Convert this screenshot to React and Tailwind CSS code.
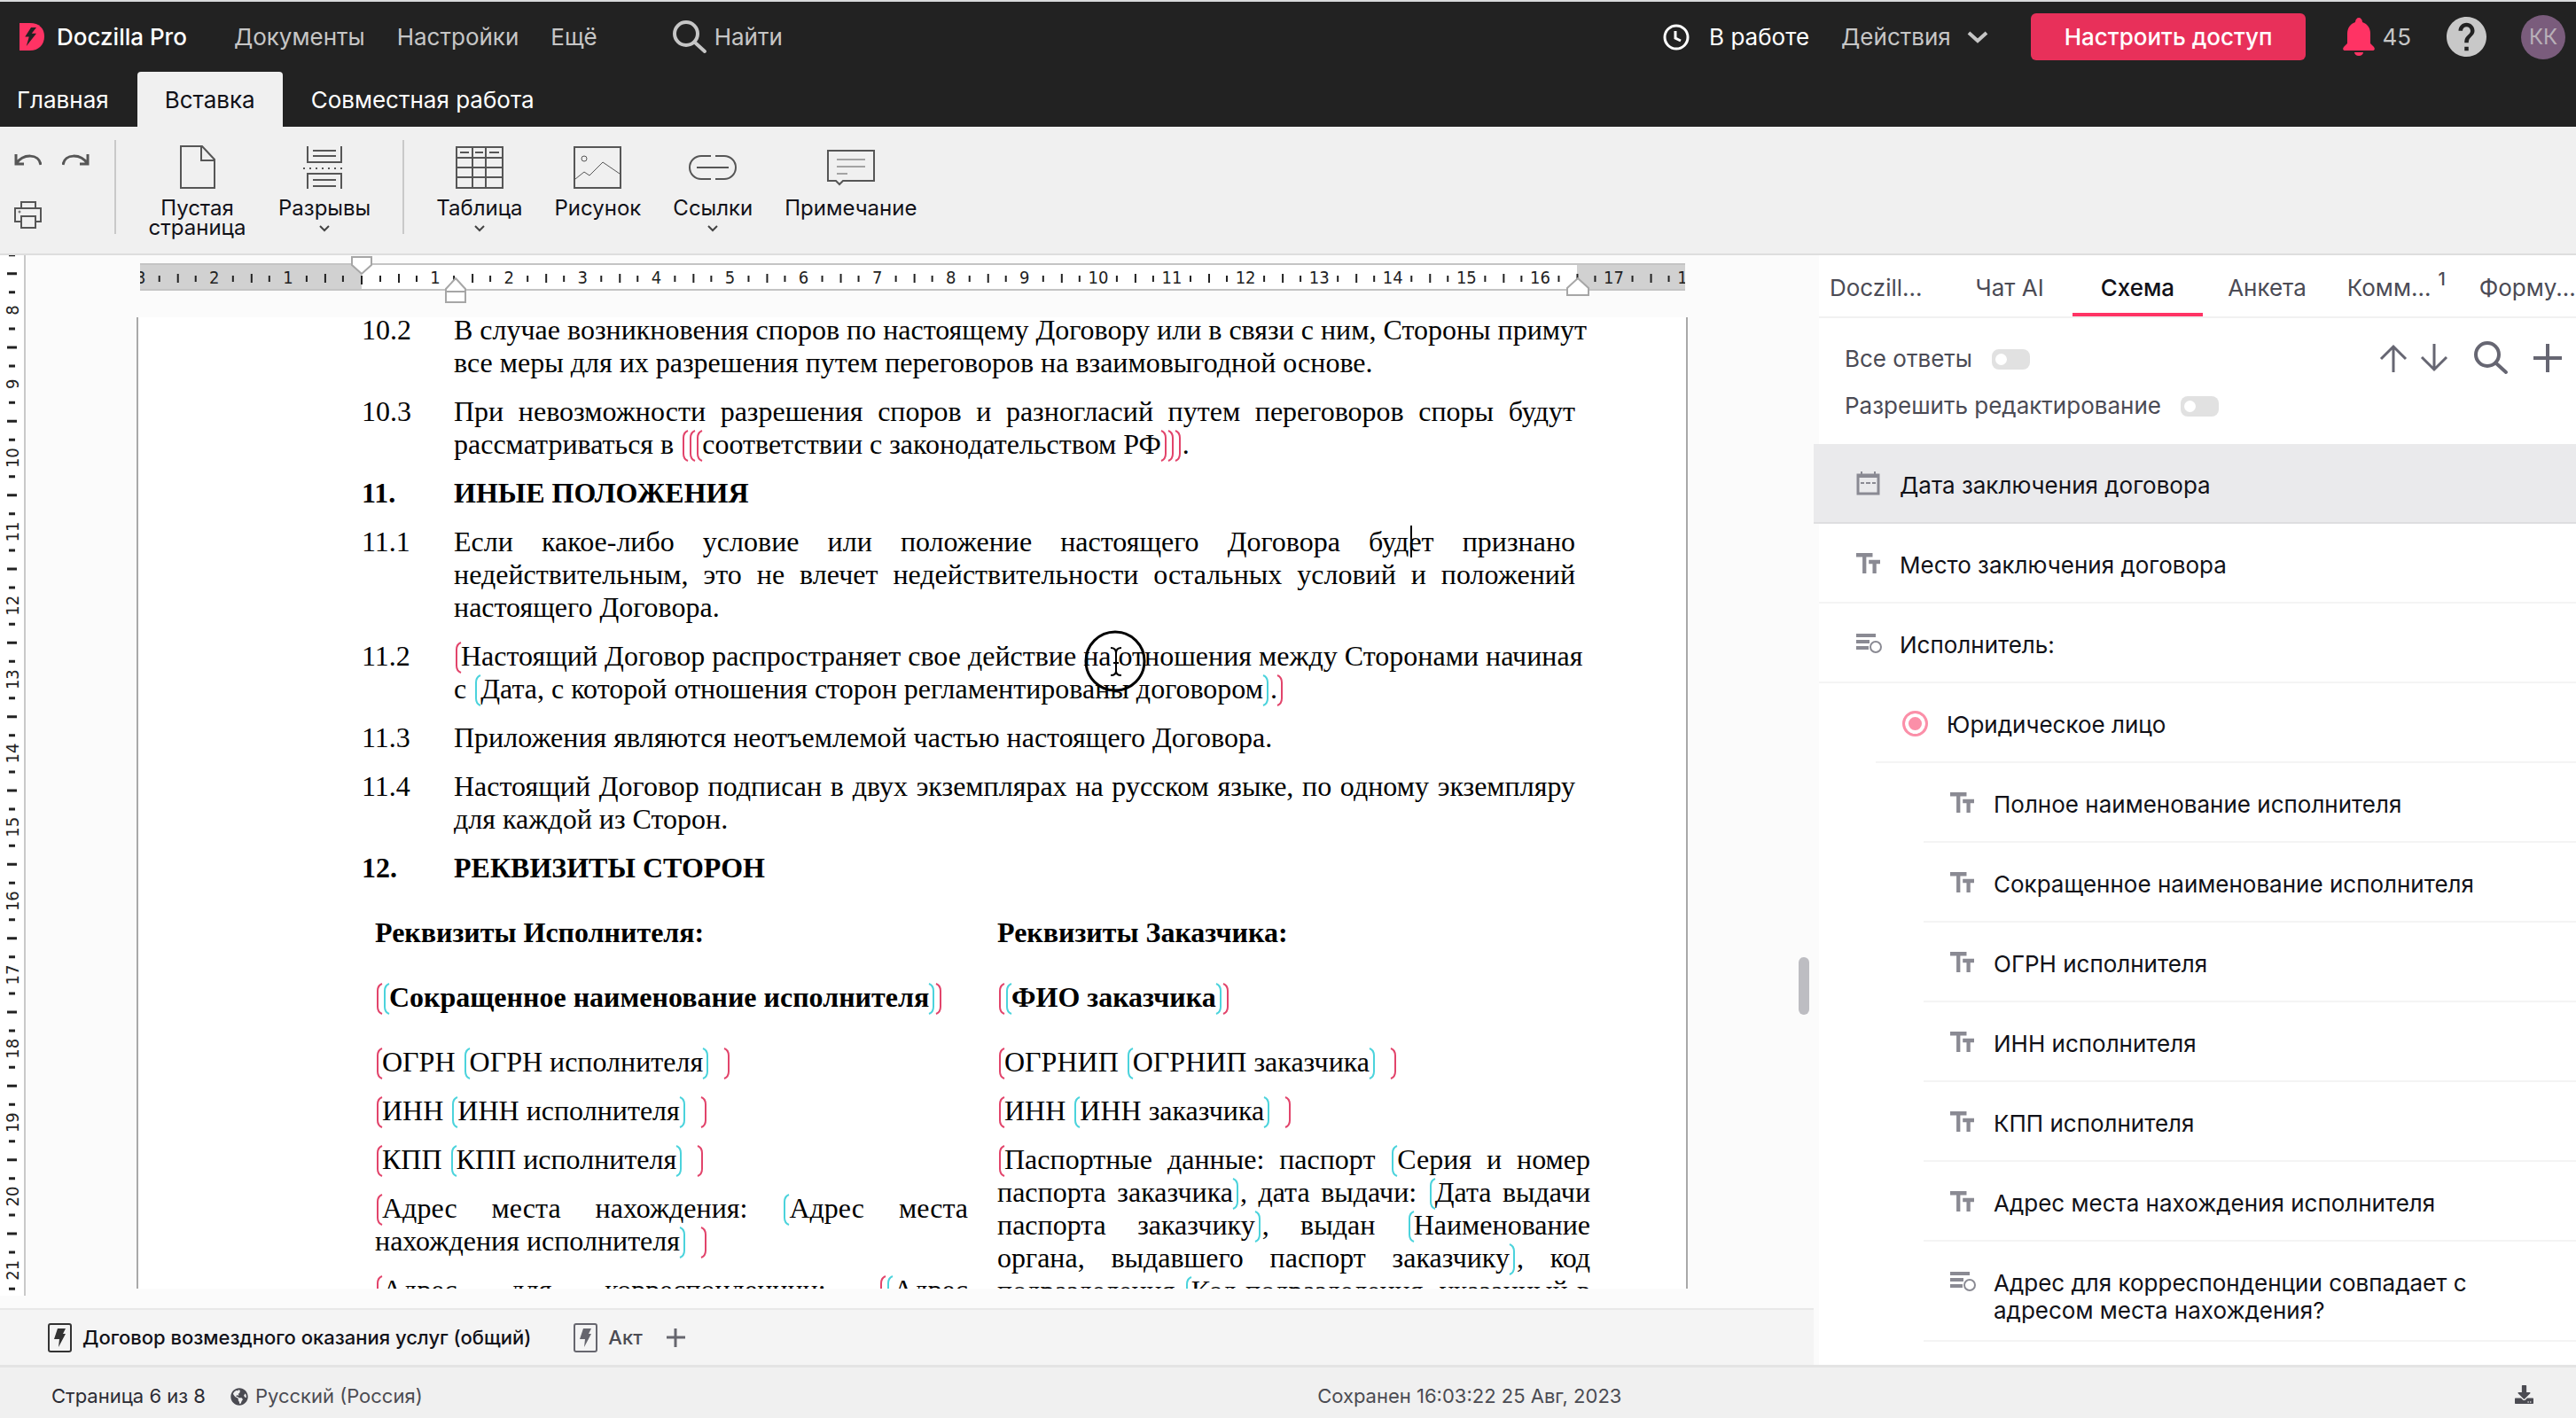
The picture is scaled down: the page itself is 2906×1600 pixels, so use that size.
import { FaGlobeAmericas, FaDownload } from "react-icons/fa";

const OPEN = "M8 1 Q3 3 3 9 V27 Q3 33 8 35";
const CLOSE = "M0 1 Q5 3 5 9 V27 Q5 33 0 35";

// Field brackets inside the document text
const Mark = ({ d, className }) => (
  <svg viewBox="0 0 8 36" className={`inline w-2 h-9 -my-1 align-[-5px] overflow-visible fill-none stroke-2 ${className}`}>
    <path d={d} />
  </svg>
);
const PO = () => <Mark d={OPEN} className="stroke-[#e2446b]" />;
const PC = () => <Mark d={CLOSE} className="stroke-[#e2446b]" />;
const CO = () => <Mark d={OPEN} className="stroke-[#4bd3dc]" />;
const CC = () => <Mark d={CLOSE} className="stroke-[#4bd3dc]" />;

// One justified line of a paragraph, the last line stays ragged
const Line = ({ children }) => (
  <span className="block whitespace-nowrap [text-align-last:justify]">{children}</span>
);
const Last = ({ children }) => <span className="block whitespace-nowrap">{children}</span>;

const Clause = ({ num, bold, children }) => (
  <div className={`flex ${bold ? "font-bold" : ""}`}>
    <span className="w-[104px] shrink-0">{num}</span>
    <p className="flex-1 min-w-0">{children}</p>
  </div>
);

const Icon = ({ w, h, children }) => (
  <svg width={w} height={h} viewBox={`0 0 ${w} ${h}`} fill="none" stroke="#565656" strokeWidth="2" className="shrink-0">
    {children}
  </svg>
);

const SearchIcon = ({ className }) => (
  <svg viewBox="0 0 40 38" fill="none" stroke="currentColor" strokeWidth="4" strokeLinecap="round" className={className}>
    <circle cx="16" cy="15" r="13" />
    <path d="M26 25 L37 35" />
  </svg>
);

const Chevron = ({ className }) => (
  <svg viewBox="0 0 12 8" fill="none" stroke="currentColor" strokeWidth="2" className={className}>
    <path d="M1 1 L6 6 L11 1" />
  </svg>
);

const BOLT = "M12 0 L3 14 H9 L5 28 L20 9 H13 L20 0 Z";

const DocIcon = ({ className }) => (
  <svg viewBox="0 0 27 33" fill="none" className={className}>
    <rect x="1" y="1" width="25" height="31" rx="2" stroke="currentColor" strokeWidth="2" />
    <path d="M11 6 H20 L17 12 H20 L12 27 L13 18 H7 Z" fill="currentColor" />
  </svg>
);

const tools = [
  {
    label: "Пустая страница", width: "w-[111px]",
    icon: (
      <Icon w={40} h={50}>
        <path d="M1 1 H25 L39 16 V48 H1 Z M24 1 V17 H39" />
      </Icon>
    ),
  },
  {
    label: "Разрывы", menu: true,
    icon: (
      <Icon w={50} h={50}>
        <path d="M6 1 V19 H44 V1 M6 49 V32 H44 V49 M12 6 H38 M12 12 H38 M12 39 H38 M12 46 H38" />
        <path d="M1 26 H50" strokeDasharray="2 5" />
      </Icon>
    ),
  },
  {
    label: "Таблица", menu: true, divider: true,
    icon: (
      <Icon w={54} h={48}>
        <path d="M1 1 H53 V47 H1 Z M1 13 H53 M1 24 H53 M1 35 H53 M19 1 V47 M34 1 V47 M5 7 H15 M22 7 H31 M38 7 H49" />
      </Icon>
    ),
  },
  {
    label: "Рисунок",
    icon: (
      <Icon w={54} h={48}>
        <path d="M1 1 H53 V47 H1 Z" />
        <path d="M2 37 L12 29 L18 33 L33 18 L52 31" strokeWidth="1" />
        <circle cx="12" cy="14" r="3" strokeWidth="1" />
      </Icon>
    ),
  },
  {
    label: "Ссылки", menu: true,
    icon: (
      <Icon w={54} h={28}>
        <path d="M25 1 H14 A13 13 0 0 0 14 27 H25 M30 1 H40 A13 13 0 0 1 40 27 H30 M9 14 H45" />
      </Icon>
    ),
  },
  {
    label: "Примечание",
    icon: (
      <Icon w={54} h={42}>
        <path d="M1 2 H53 V36 H18 L14 40 L10 36 H1 Z" />
        <path d="M11 12 H43 M11 20 H43 M11 28 H23" strokeWidth="1" />
      </Icon>
    ),
  },
];

const TextIcon = () => (
  <svg viewBox="2.5 4 19 15" className="w-[27px] h-[23px] fill-[#8a8a93]" preserveAspectRatio="none">
    <path d="M2.5 4v3h5v12h3V7h5V4h-13zm19 5h-9v3h3v7h3v-7h3V9z" />
  </svg>
);

const CalendarIcon = () => (
  <svg viewBox="0 0 27 27" fill="none" stroke="#8a8a93" className="w-[27px] h-[27px]">
    <path d="M2 4 H25 V25 H2 Z" strokeWidth="3" />
    <path d="M1 5 H26" strokeWidth="4" />
    <path d="M6 0 V4 M21 0 V4 M5 13 H9 M11 13 H16 M18 13 H22" strokeWidth="2" />
  </svg>
);

const ListIcon = () => (
  <svg viewBox="0 0 30 23" fill="none" stroke="#8a8a93" className="w-[30px] h-[23px]">
    <path d="M0 3 H22 M0 10 H15 M0 17 H14" strokeWidth="4" />
    <circle cx="22" cy="16" r="6" strokeWidth="2" />
  </svg>
);

const rowIcons = { date: <CalendarIcon />, text: <TextIcon />, list: <ListIcon /> };
const indents = ["pl-[42px]", "ml-16 pl-[30px]", "ml-[118px] pl-[30px]"];

const schema = [
  { level: 0, type: "date", title: "Дата заключения договора", active: true },
  { level: 0, type: "text", title: "Место заключения договора" },
  { level: 0, type: "list", title: "Исполнитель:" },
  { level: 1, type: "radio", title: "Юридическое лицо" },
  { level: 2, type: "text", title: "Полное наименование исполнителя" },
  { level: 2, type: "text", title: "Сокращенное наименование исполнителя" },
  { level: 2, type: "text", title: "ОГРН исполнителя" },
  { level: 2, type: "text", title: "ИНН исполнителя" },
  { level: 2, type: "text", title: "КПП исполнителя" },
  { level: 2, type: "text", title: "Адрес места нахождения исполнителя" },
  { level: 2, type: "list", title: "Адрес для корреспонденции совпадает с адресом места нахождения?" },
];

// 16.5 cm of text width between the margins
const CM = 1371 / 16.5;
const rulerFont = "font-['DejaVu_Sans_Condensed','DejaVu_Sans',sans-serif] text-[20px] fill-[#222]";

const HRuler = () => (
  <svg width="1743" height="31" className="overflow-hidden block">
    <rect width="1743" height="31" fill="#d1d1d1" />
    <rect x="250" y="2" width="1371" height="27" fill="#fff" />
    <path d="M0 1 H1743 M0 30 H1743" stroke="#c4c4c4" strokeWidth="2" />
    {Array.from({ length: 22 }, (_, i) => i - 3).map((n) => {
      const x = 250 + n * CM;
      return (
        <g key={n}>
          {n === 0 && <path d={`M${x} 14 V24`} stroke="#222" strokeWidth="2" />}
          {n !== 0 && n < 19 && (
            <text x={x} y="23" textAnchor="middle" className={rulerFont}>{Math.abs(n)}</text>
          )}
          <path d={`M${x + 21} 14 V21 M${x + 42} 12 V22 M${x + 62} 14 V21`} stroke="#222" strokeWidth="2" />
        </g>
      );
    })}
  </svg>
);

const VRuler = () => (
  <svg width="27" height="1174" className="block overflow-hidden">
    {Array.from({ length: 15 }, (_, i) => i + 7).map((n) => {
      const y = 62 + ((n - 8) * 250) / 3;
      return (
        <g key={n}>
          {n > 7 && (
            <text transform={`translate(21 ${y}) rotate(-90)`} textAnchor="middle" className={rulerFont}>{n}</text>
          )}
          <path d={`M10 ${y + 21} h7 M8 ${y + 42} h11 M10 ${y + 63} h7`} stroke="#222" strokeWidth="3" />
        </g>
      );
    })}
  </svg>
);

const Header = () => (
  <header className="bg-[#222] border-t-2 border-[#d9dadc] text-[26px] leading-8 text-[#c6c6c6]">
    <div className="flex items-center h-[79px] pl-[22px] pr-3">
      <a href="#" className="flex items-center gap-3.5 text-white font-medium">
        <svg viewBox="0 0 28 31" className="w-7 h-[31px]">
          <path d="M0 0 H12 C22 0 28 6 28 15 C28 25 21 31 12 31 H0 Z" fill="#ff3364" />
          <path d={BOLT} fill="#222" transform="translate(4 5) scale(0.75)" />
        </svg>
        Doczilla Pro
      </a>
      <nav className="flex gap-9 ml-[53px]">
        <a href="#">Документы</a>
        <a href="#">Настройки</a>
        <a href="#">Ещё</a>
      </nav>
      <button className="flex items-center gap-2 ml-[84px]">
        <SearchIcon className="w-10 h-[38px]" />
        Найти
      </button>

      <div className="flex items-center ml-auto">
        <button className="flex items-center gap-[22px] text-white">
          <svg viewBox="0 0 30 30" fill="none" stroke="currentColor" strokeWidth="3" className="w-[30px] h-[30px]">
            <circle cx="15" cy="15" r="13" />
            <path d="M14 8 V16 L20 19" />
          </svg>
          В работе
        </button>
        <button className="flex items-center gap-[18px] ml-9">
          Действия
          <svg viewBox="0 0 24 14" fill="none" stroke="currentColor" strokeWidth="4" className="w-6 h-3.5">
            <path d="M2 2 L12 11 L22 2" />
          </svg>
        </button>
        <button className="h-[53px] px-[38px] ml-12 rounded-md bg-[#e8305a] text-white font-medium">Настроить доступ</button>
        <button className="flex items-center gap-2 ml-[42px]">
          <svg viewBox="0 0 36 43" fill="#ff3364" className="w-9 h-[43px]">
            <path d="M18 0 C20 0 22 2 22 5 C28 7 31 12 31 18 V29 L35 33 C37 36 35 37 33 37 H3 C1 37 -1 36 1 33 L5 29 V18 C5 12 8 7 14 5 C14 2 16 0 18 0 Z" />
            <path d="M13 39 H23 C23 41 21 43 18 43 C15 43 13 41 13 39 Z" />
          </svg>
          45
        </button>
        <button aria-label="Справка" className="ml-10">
          <svg viewBox="2 2 20 20" fill="#c8c8c8" className="w-[45px] h-[45px]">
            <path d="M12 2C6.48 2 2 6.48 2 12s4.48 10 10 10 10-4.48 10-10S17.52 2 12 2zm1 17h-2v-2h2v2zm2.07-7.75l-.9.92C13.45 12.9 13 13.5 13 15h-2v-.5c0-1.1.45-2.1 1.17-2.83l1.24-1.26c.37-.36.59-.86.59-1.41 0-1.1-.9-2-2-2s-2 .9-2 2H8c0-2.21 1.79-4 4-4s4 1.79 4 4c0 .88-.36 1.68-.93 2.25z" />
          </svg>
        </button>
        <button className="ml-[39px] w-[50px] h-[50px] rounded-full bg-[#7a5c7c] text-[24px] text-[#b8b0b8]">КК</button>
      </div>
    </div>

    <nav className="flex h-[62px] text-white">
      <button className="pt-0.5 pl-[19px] pr-8">Главная</button>
      <button className="pt-0.5 px-[31px] rounded-t-sm bg-[#f0f0f0] text-[#111118]">Вставка</button>
      <button className="pt-0.5 px-8">Совместная работа</button>
    </nav>
  </header>
);

const Toolbar = () => (
  <div className="flex h-[145px] bg-[#f0f0f0] border-b-2 border-[#dedede] text-[24px] leading-[22px] text-[#111118]">
    <div className="grid grid-cols-2 gap-x-[23px] gap-y-10 content-start pt-[31px] pl-4 pr-7">
      <button aria-label="Отменить">
        <Icon w={31} h={13}>
          <path d="M2 0 V11 H11 M2 11 C10 -1 28 -1 30 12" strokeWidth="3" />
        </Icon>
      </button>
      <button aria-label="Повторить">
        <Icon w={31} h={13}>
          <path d="M29 0 V11 H20 M29 11 C21 -1 3 -1 1 12" strokeWidth="3" />
        </Icon>
      </button>
      <button aria-label="Печать">
        <Icon w={31} h={31}>
          <path d="M8 8 V1 H24 V8 M8 23 H1 V8 H30 V23 H24 M8 17 H24 V30 H8 Z" />
          <circle cx="6" cy="12" r="1" strokeWidth="1" />
        </Icon>
      </button>
    </div>
    <div className="w-0.5 h-[106px] mt-[15px] bg-[#c9c9c9]" />
    <div className="flex gap-9 pl-9">
      {tools.map((t) => (
        <div key={t.label} className="flex gap-9">
          {t.divider && <div className="w-0.5 h-[106px] mt-[15px] bg-[#c9c9c9]" />}
          <button className={`flex flex-col items-center pt-[21px] ${t.width || ""}`}>
            <span className="flex items-center h-[50px] mb-2.5">{t.icon}</span>
            {t.label}
            {t.menu && <Chevron className="w-3 h-2 mt-2 text-[#444]" />}
          </button>
        </div>
      ))}
    </div>
  </div>
);

const Contract = () => (
  <div className="-mt-1 ml-[252px] w-[1369px] flex flex-col gap-[18px]">
    <Clause num="10.2">
      <Line>В случае возникновения споров по настоящему Договору или в связи с ним, Стороны примут</Line>
      <Last>все меры для их разрешения путем переговоров на взаимовыгодной основе.</Last>
    </Clause>
    <Clause num="10.3">
      <Line>При невозможности разрешения споров и разногласий путем переговоров споры будут</Line>
      <Last>рассматриваться в <PO /><PO /><PO />соответствии с законодательством РФ<PC /><PC /><PC />.</Last>
    </Clause>
    <Clause num="11." bold>ИНЫЕ ПОЛОЖЕНИЯ</Clause>
    <Clause num="11.1">
      <Line>
        Если какое-либо условие или положение настоящего Договора буд
        <span className="relative"><span className="absolute left-0.5 top-0 w-0.5 h-9 bg-black" /></span>
        ет признано
      </Line>
      <Line>недействительным, это не влечет недействительности остальных условий и положений</Line>
      <Last>настоящего Договора.</Last>
    </Clause>
    <Clause num="11.2">
      <Line><PO />Настоящий Договор распространяет свое действие на отношения между Сторонами начиная</Line>
      <Last>с <CO />Дата, с которой отношения сторон регламентированы договором<CC />.<PC /></Last>
    </Clause>
    <Clause num="11.3"><Last>Приложения являются неотъемлемой частью настоящего Договора.</Last></Clause>
    <Clause num="11.4">
      <Line>Настоящий Договор подписан в двух экземплярах на русском языке, по одному экземпляру</Line>
      <Last>для каждой из Сторон.</Last>
    </Clause>
    <Clause num="12." bold>РЕКВИЗИТЫ СТОРОН</Clause>

    <div className="grid grid-cols-2 gap-x-[33px] ml-[15px] w-[1371px] mt-[18px]">
      <div className="flex flex-col gap-[18px]">
        <p className="font-bold mb-[18px]">Реквизиты Исполнителя:</p>
        <p className="font-bold mb-[18px]"><PO /><CO />Сокращенное наименование исполнителя<CC /><PC /></p>
        <p><PO />ОГРН <CO />ОГРН исполнителя<CC />&nbsp; <PC /></p>
        <p><PO />ИНН <CO />ИНН исполнителя<CC />&nbsp; <PC /></p>
        <p><PO />КПП <CO />КПП исполнителя<CC />&nbsp; <PC /></p>
        <p>
          <Line><PO />Адрес места нахождения: <CO />Адрес места</Line>
          <Last>нахождения исполнителя<CC />&nbsp; <PC /></Last>
        </p>
        <p>
          <Line><PO />Адрес для корреспонденции: <PO /><CO />Адрес</Line>
        </p>
      </div>
      <div className="flex flex-col gap-[18px]">
        <p className="font-bold mb-[18px]">Реквизиты Заказчика:</p>
        <p className="font-bold mb-[18px]"><PO /><CO />ФИО заказчика<CC /><PC /></p>
        <p><PO />ОГРНИП <CO />ОГРНИП заказчика<CC />&nbsp; <PC /></p>
        <p><PO />ИНН <CO />ИНН заказчика<CC />&nbsp; <PC /></p>
        <p>
          <Line><PO />Паспортные данные: паспорт <CO />Серия и номер</Line>
          <Line>паспорта заказчика<CC />, дата выдачи: <CO />Дата выдачи</Line>
          <Line>паспорта заказчику<CC />, выдан <CO />Наименование</Line>
          <Line>органа, выдавшего паспорт заказчику<CC />, код</Line>
          <Line>подразделения <CO />Код подразделения, указанный в</Line>
        </p>
      </div>
    </div>
  </div>
);

const Editor = () => (
  <section className="flex flex-col flex-1 min-w-0 bg-[#fbfbfb]">
    <div className="flex flex-1 min-h-0">
      <div className="shrink-0 mb-3.5 bg-white border-r-2 border-[#c9c9c9] overflow-hidden">
        <VRuler />
      </div>

      <div className="flex flex-col flex-1 min-w-0 items-center pt-[9px] pb-[22px]">
        <div className="relative w-[1743px] shrink-0">
          <HRuler />
          <svg width="24" height="22" className="absolute left-[238px] -top-2" fill="#fff" stroke="#a6a6a6" strokeWidth="2">
            <path d="M1 1 H23 V10 L12 20 L1 10 Z" />
          </svg>
          <svg width="24" height="30" className="absolute left-[344px] top-4" fill="#fff" stroke="#a6a6a6" strokeWidth="2">
            <path d="M12 1 L23 13 V28 H1 V13 Z M1 16 H23" />
          </svg>
          <svg width="26" height="22" className="absolute left-[1609px] top-4" fill="#fff" stroke="#a6a6a6" strokeWidth="2">
            <path d="M13 1 L25 12 V20 H1 V12 Z" />
          </svg>
        </div>

        <div className="relative flex-1 min-h-0 w-[1750px] mt-[30px] overflow-hidden bg-white border-x-2 border-[#a9a9a9] font-['Liberation_Serif',serif] text-[32px] leading-[37px] text-black">
          <Contract />
          {/* mouse pointer with click ring */}
          <svg width="70" height="70" viewBox="0 0 70 70" fill="none" stroke="#000" className="absolute left-[1067px] top-[353px]">
            <circle cx="35" cy="35" r="33" strokeWidth="3" />
            <path d="M30 20 Q36 20 36 26 V46 Q36 51 30 51 M42 20 Q36 20 36 26 M36 46 Q36 51 42 51 M33 37 H39" strokeWidth="2" />
          </svg>
        </div>
      </div>

      <div className="w-[17px] flex flex-col">
        <div className="basis-2/3" />
        <div className="w-3 h-[65px] rounded-full bg-[#bdbdc2]" />
      </div>
    </div>

    <div className="flex items-center h-16 shrink-0 pl-[54px] bg-[#f4f4f4] border-t-2 border-[#e8e8e8] text-[22px] text-[#4b4b52]">
      <button className="flex items-center gap-3 text-[#111118] font-medium">
        <DocIcon className="w-[27px] h-[33px] text-[#333]" />
        Договор возмездного оказания услуг (общий)
      </button>
      <button className="flex items-center gap-3 ml-12 font-medium">
        <DocIcon className="w-[27px] h-[33px] text-[#66666e]" />
        Акт
      </button>
      <button aria-label="Добавить документ" className="ml-[27px]">
        <svg viewBox="0 0 21 21" stroke="#66666e" strokeWidth="3" className="w-[21px] h-[21px]">
          <path d="M10 0 V21 M0 10 H21" />
        </svg>
      </button>
    </div>
  </section>
);

const Toggle = ({ label }) => (
  <label className="flex items-center gap-[22px]">
    {label}
    <input
      type="checkbox"
      className="appearance-none relative w-[43px] h-[23px] rounded-lg bg-[#e1e1e1] before:absolute before:left-1 before:top-[5px] before:w-[13px] before:h-[13px] before:rounded-full before:bg-white"
    />
  </label>
);

const SidePanel = () => (
  <aside className="w-[860px] shrink-0 pl-1.5 bg-[#fbfbfb]">
    <div className="h-full bg-white">
      <nav className="flex items-stretch h-[71px] border-b-2 border-[#f1f1f1] pl-3 text-[26px] text-[#4b4b55] whitespace-nowrap">
        <button className="pt-1 pr-7">Doczill...</button>
        <button className="pt-1 px-8">Чат AI</button>
        <button className="pt-2 px-8 border-b-4 border-[#ff3364] text-[#111118] font-medium">Схема</button>
        <button className="pt-1 px-7">Анкета</button>
        <button className="flex pt-1 pl-[18px] pr-[38px] items-center">
          Комм...
          <sup className="pl-2 text-[20px] font-medium -top-2.5">1</sup>
        </button>
        <button className="pt-1">Форму...</button>
      </nav>

      <div className="flex justify-between items-start h-[142px] pt-[26px] pl-[29px] pr-4 text-[26px] leading-8 text-[#4b4b55]">
        <div className="flex flex-col gap-[21px] pt-1">
          <Toggle label="Все ответы" />
          <Toggle label="Разрешить редактирование" />
        </div>
        <div className="flex items-center text-[#666672]">
          <button aria-label="Вверх">
            <svg viewBox="0 0 32 32" fill="none" stroke="currentColor" strokeWidth="3" className="w-8 h-8">
              <path d="M16 32 V3 M2 17 L16 3 L30 17" />
            </svg>
          </button>
          <button aria-label="Вниз" className="ml-3.5">
            <svg viewBox="0 0 32 32" fill="none" stroke="currentColor" strokeWidth="3" className="w-8 h-8">
              <path d="M16 0 V29 M2 15 L16 29 L30 15" />
            </svg>
          </button>
          <button aria-label="Поиск" className="ml-7">
            <SearchIcon className="w-10 h-[38px]" />
          </button>
          <button aria-label="Добавить" className="ml-7">
            <svg viewBox="0 0 32 32" stroke="currentColor" strokeWidth="4" className="w-8 h-8">
              <path d="M16 0 V32 M0 16 H32" />
            </svg>
          </button>
        </div>
      </div>

      <ul className="text-[26px] leading-[31px] text-[#111118]">
        {schema.map((row) => (
          <li
            key={row.title}
            className={`flex min-h-[90px] pt-[31px] pb-[18px] border-b-2 ${row.active ? "-ml-1.5 pl-12 bg-[#eaeaec] border-[#dedee0]" : `border-[#f4f4f4] ${indents[row.level]}`}`}
          >
            {row.type === "radio" ? (
              <label className="flex">
                <span className="w-[50px]">
                  <input
                    type="radio"
                    name="party"
                    defaultChecked
                    className="block appearance-none w-[29px] h-[29px] rounded-full border-[3px] border-[#fb8fa8] bg-[#fb8fa8] shadow-[inset_0_0_0_4px_#fff]"
                  />
                </span>
                {row.title}
              </label>
            ) : (
              <>
                <span className="w-[49px] h-[27px] shrink-0 flex items-center">{rowIcons[row.type]}</span>
                <span className="pr-[100px]">{row.title}</span>
              </>
            )}
          </li>
        ))}
      </ul>
    </div>
  </aside>
);

const StatusBar = () => (
  <footer className="flex items-center h-[60px] shrink-0 pr-12 bg-[#f0f0f0] border-t-[3px] border-[#e4e4e4] text-[22px] text-[#4b4b52]">
    <div className="flex items-center w-[52%] pt-2 pl-[58px]">
      <span className="text-[#2b2b33]">Страница 6 из 8</span>
      <FaGlobeAmericas className="ml-7 mr-2 w-5 h-5" />
      Русский (Россия)
    </div>
    <span className="pt-2">Сохранен 16:03:22 25 Авг, 2023</span>
    <button aria-label="Скачать" className="ml-auto pt-1">
      <FaDownload className="w-[21px] h-[21px]" />
    </button>
  </footer>
);

export default function App() {
  return (
    <div className="flex flex-col h-screen overflow-hidden font-['Inter',sans-serif]">
      <Header />
      <Toolbar />
      <main className="flex flex-1 min-h-0">
        <Editor />
        <SidePanel />
      </main>
      <StatusBar />
    </div>
  );
}
